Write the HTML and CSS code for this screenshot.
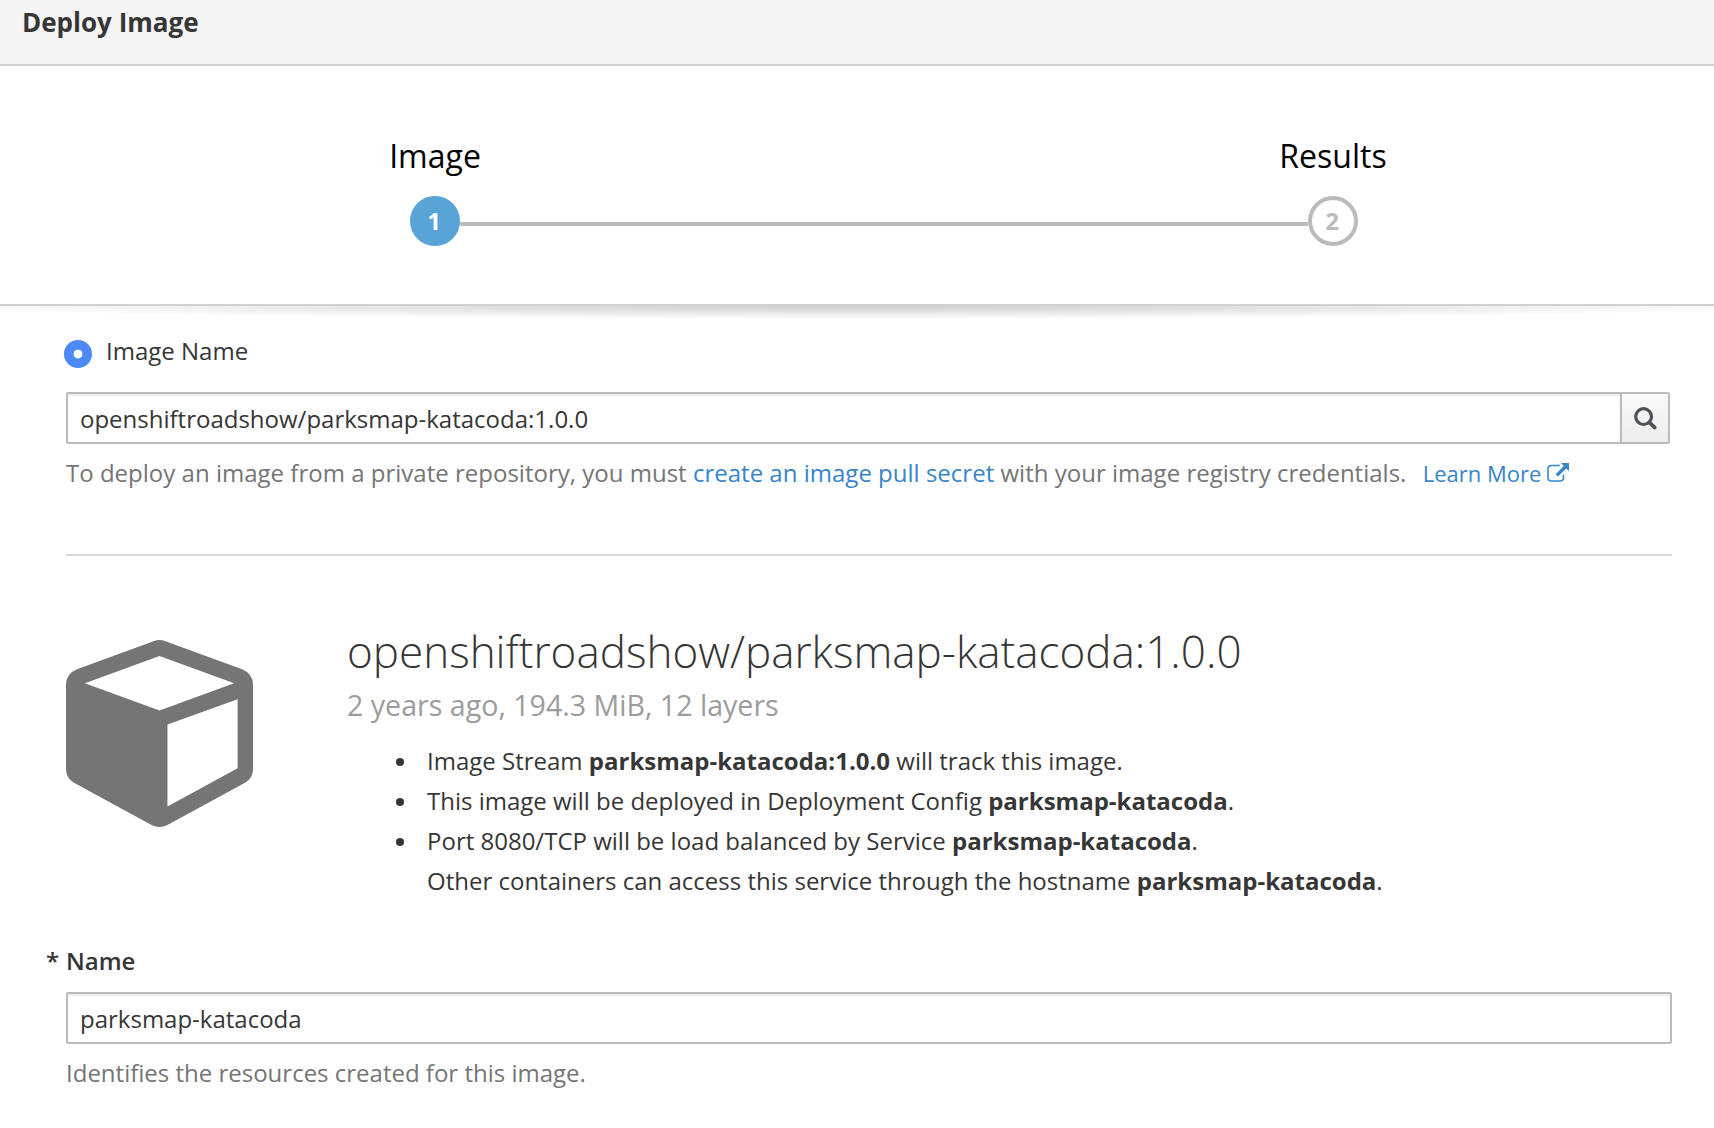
FILE: index.html
```html
<!DOCTYPE html>
<html lang="en">
<head>
<meta charset="utf-8">
<title>Deploy Image</title>
<link rel="stylesheet" href="styles.css">
</head>
<body>
<header class="modal-header"><h1 class="modal-title">Deploy Image</h1></header>
<nav class="wizard-steps">
  <div class="step active"><span class="step-label">Image</span><span class="step-number">1</span></div>
  <div class="step-line"></div>
  <div class="step"><span class="step-label">Results</span><span class="step-number">2</span></div>
</nav>
<main class="content">
  <label class="radio-row"><span class="radio"></span><span class="radio-text">Image Name</span></label>
  <div class="input-group">
    <div class="input">openshiftroadshow/parksmap-katacoda:1.0.0</div>
    <button class="search-button" aria-label="Search">
      <svg width="23" height="23" viewBox="0 0 23 23" fill="none" stroke="#4d5258"><circle cx="9.6" cy="9.6" r="7.9" stroke-width="3.2"/><path d="M15.3 15.3L20.6 20.4" stroke-width="3.8" stroke-linecap="round"/></svg>
    </button>
  </div>
  <p class="help private-help">To deploy an image from a private repository, you must <a>create an image pull secret</a> with your image registry credentials. <a class="learn">Learn More<svg class="ext" width="22" height="20" viewBox="0 0 22 20"><path d="M12.8 2.5H4.5Q1 2.5 1 6V14.5Q1 18 4.5 18H13Q16.5 18 16.5 14.5V11.5" fill="none" stroke="currentColor" stroke-width="1.6"/><path d="M14 0H22V8L19.2 5.4L11 13.6L8.6 11.2L16.8 3Z" fill="currentColor"/></svg></a></p>
  <hr class="rule">
  <section class="summary">
    <svg class="cube" width="187" height="187" viewBox="0 0 188 188"><path fill="#757575" fill-rule="evenodd" d="M88 1.2Q94 -1 100 1.2L177 29.5Q188 34 188 45V130Q188 139 180 143.5L102 186Q94 190 86 186L8 143.5Q0 139 0 130V45Q0 34 11 29.5ZM94 16L19 43.5L94 71L169 43.5ZM172.500 59.5L102 85V167.500L172.500 129Z"/></svg>
    <div class="details">
      <h2 class="image-name">openshiftroadshow/parksmap-katacoda:1.0.0</h2>
      <div class="meta">2 years ago, 194.3 MiB, 12 layers</div>
      <ul class="facts">
        <li>Image Stream <strong>parksmap-katacoda:1.0.0</strong> will track this image.</li>
        <li>This image will be deployed in Deployment Config <strong>parksmap-katacoda</strong>.</li>
        <li>Port 8080/TCP will be load balanced by Service <strong>parksmap-katacoda</strong>.<br>Other containers can access this service through the hostname <strong>parksmap-katacoda</strong>.</li>
      </ul>
    </div>
  </section>
  <label class="field-label"><span class="required">*</span>Name</label>
  <div class="input name-input">parksmap-katacoda</div>
  <p class="help">Identifies the resources created for this image.</p>
</main>
</body>
</html>
```
FILE: styles.css
```css
* { box-sizing: border-box; }
body { margin: 0; height: 1128px; overflow: hidden; background: #fff; color: #363636; font: 24px/40px "Open Sans", sans-serif; }
h1, h2, p, ul { margin: 0; padding: 0; }
.modal-header { height: 66px; padding: 2px 22px; background: #f5f5f5; border-bottom: 2px solid #d1d1d1; }
.modal-title { font-size: 26px; line-height: 40px; font-weight: 700; }
.wizard-steps { position: relative; display: flex; justify-content: center; height: 240px; padding: 70px 0 0 54px; border-bottom: 2px solid #d1d1d1; }
.wizard-steps::after { content: ""; position: absolute; left: 0; right: 0; top: 240px; height: 13px; background: radial-gradient(ellipse 55% 100% at 50% 0, rgba(0,0,0,.2), rgba(0,0,0,0)); }
.step { display: flex; flex-direction: column; align-items: center; width: 50px; color: #000; }
.step-label { height: 40px; font-size: 32px; line-height: 40px; white-space: nowrap; }
.step-number { width: 50px; height: 50px; margin-top: 20px; padding-right: 2px; border: 4px solid #bbb; border-radius: 50%; color: #bbb; font-weight: 700; line-height: 42px; text-align: center; }
.active .step-number { background: #58a4d7; border-color: #58a4d7; color: #fff; }
.step-line { width: 848px; height: 4px; margin-top: 86px; background: #bbb; }
.content { padding: 25px 42px 0 66px; }
.radio-row { display: flex; height: 40px; margin-left: -2px; }
.radio { width: 28px; height: 28px; margin: 9px 14px 0 0; border-radius: 50%; background: radial-gradient(circle, #fff 4px, #4d8af7 4.8px); }
.input-group { display: flex; width: 1604px; margin-top: 21px; }
.input { flex: 1; height: 52px; padding: 5px 12px 3px; border: 2px solid #bbb; border-radius: 2px; box-shadow: inset 0 2px 2px rgba(3,3,3,.075); white-space: nowrap; }
.input-group .input { border-radius: 2px 0 0 2px; }
.search-button { display: flex; align-items: center; justify-content: center; width: 50px; height: 52px; margin-left: -2px; padding: 0; border: 2px solid #bbb; border-radius: 0 2px 2px 0; background: linear-gradient(#fafafa, #ededed); }
.help { margin-top: 9px; height: 40px; color: #757575; white-space: nowrap; }
.private-help { letter-spacing: .01px; }
a { color: #3785c9; }
.learn { margin-left: 10px; font-size: 22px; }
.ext { margin-left: 6px; vertical-align: -1px; }
.rule { height: 2px; margin: 61px 0 84px; border: 0; background: #d9d9d9; }
.summary { display: flex; gap: 94px; height: 300px; }
.details { margin-top: -19px; }
.image-name { font-size: 44px; line-height: 60px; font-weight: 300; white-space: nowrap; }
.meta { font-size: 28.6px; line-height: 40px; margin-top: 4px; color: #9c9c9c; }
.facts { margin-top: 16px; padding-left: 80px; list-style: none; }
.facts li::before { content: ""; float: left; width: 8px; height: 8px; margin: 17px 0 0 -31px; border-radius: 50%; background: #363636; }
.field-label { display: block; position: relative; height: 40px; padding-top: 1px; font-weight: 600; }
.required { position: absolute; left: -20px; }
.name-input { margin-top: 12px; }
```
